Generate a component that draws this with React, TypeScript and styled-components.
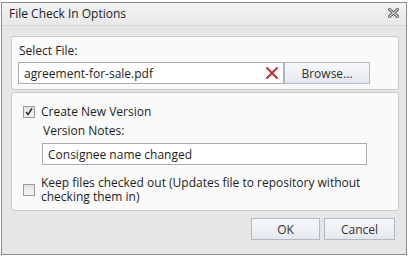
import styled, { createGlobalStyle } from 'styled-components';

const Global = createGlobalStyle`
  html, body {
    margin: 0;
    padding: 0;
    background: #ffffff;
  }
  body {
    font-family: "Open Sans", "Noto Sans", "Liberation Sans", sans-serif;
    font-size: 12px;
    color: #1e1e1e;
  }
`;

const Page = styled.div`
  width: 412px;
  height: 257px;
  padding: 2px 5px 2px 1px;
  box-sizing: border-box;
`;

const Dialog = styled.div`
  height: 100%;
  box-sizing: border-box;
  border: 1px solid #8d8d8d;
  background: #e6e6e6;
  display: flex;
  flex-direction: column;
`;

const TitleBar = styled.div`
  height: 23px;
  display: flex;
  align-items: center;
  justify-content: space-between;
  padding: 0 7px 2px 7px;
  box-sizing: border-box;
  background: linear-gradient(#f4f4f4, #e8e8e8);
  border-bottom: 1px solid #d6d6d6;
`;

const Title = styled.span`
  font-size: 12px;
  color: #222;
`;

const Body = styled.div`
  flex: 1;
  padding: 10px 7px 0 9px;
  display: flex;
  flex-direction: column;
  gap: 2px;
`;

const Panel = styled.div<{ $h: number }>`
  height: ${p => p.$h}px;
  box-sizing: border-box;
  background: #fafafa;
  border: 1px solid #c9c9c9;
  border-radius: 3px;
  padding: 6px 0 0 6px;
`;

const Label = styled.div<{ $indent?: number }>`
  padding-left: ${p => p.$indent || 0}px;
  line-height: 16px;
  margin-bottom: 3px;
`;

const NotesLabel = styled(Label)`
  margin: 4px 0 4px;
`;

const FileRow = styled.div`
  display: flex;
  height: 22px;
`;

const NotesRow = styled.div`
  padding-left: 24px;
  margin-bottom: 11px;
`;

const TextBox = styled.div<{ $w: number }>`
  width: ${p => p.$w}px;
  height: 22px;
  box-sizing: border-box;
  background: #ffffff;
  border: 1px solid #a9adb3;
  display: flex;
  align-items: center;
  justify-content: space-between;
  padding: 0 4px 0 5px;
`;

const Button = styled.div<{ $w: number }>`
  width: ${p => p.$w}px;
  height: 22px;
  box-sizing: border-box;
  border: 1px solid #b2bac6;
  background: linear-gradient(#f7f8fa, #e4e8ee);
  display: flex;
  align-items: center;
  justify-content: center;
  color: #333;
`;

const CheckRow = styled.div<{ $top?: number }>`
  display: flex;
  align-items: flex-start;
  gap: 6px;
  padding-left: 5px;
  margin-top: ${p => p.$top || 0}px;
`;

const Box = styled.div<{ $offset: number }>`
  width: 12px;
  height: 12px;
  margin-top: ${p => p.$offset}px;
  box-sizing: border-box;
  border: 1px solid #9a9a9a;
  background: linear-gradient(#e2e2e2, #f6f6f6);
  flex-shrink: 0;
  display: flex;
  align-items: center;
  justify-content: center;
`;

const CheckText = styled.div`
  line-height: 14px;
`;

const Footer = styled.div`
  display: flex;
  justify-content: flex-end;
  gap: 4px;
  padding: 5px 4px 0 0;
`;

function ClearIcon() {
  return (
    <svg width="14" height="14" viewBox="0 0 14 14">
      <path d="M1.5 1.5 L12.5 12.5 M12.5 1.5 L1.5 12.5" stroke="#c0282e" strokeWidth="1.8" />
    </svg>
  );
}

function CloseIcon() {
  return (
    <svg width="11" height="10" viewBox="0 0 11 10">
      <path d="M1.5 1.5 L9.5 8.5 M9.5 1.5 L1.5 8.5" stroke="#6a6a6a" strokeWidth="3" strokeLinecap="square" />
      <path d="M1.5 1.5 L9.5 8.5 M9.5 1.5 L1.5 8.5" stroke="#fafafa" strokeWidth="1" strokeLinecap="square" />
    </svg>
  );
}

function Tick() {
  return (
    <svg width="10" height="10" viewBox="0 0 10 10">
      <path d="M2 5 L4 7.5 L8 1.5" fill="none" stroke="#333" strokeWidth="1.6" />
    </svg>
  );
}

export default function App() {
  return (
    <Page>
      <Global />
      <Dialog>
        <TitleBar>
          <Title>File Check In Options</Title>
          <CloseIcon />
        </TitleBar>
        <Body>
          <Panel $h={54}>
            <Label $indent={1}>Select File:</Label>
            <FileRow>
              <TextBox $w={266}>
                <span>agreement-for-sale.pdf</span>
                <ClearIcon />
              </TextBox>
              <Button $w={86}>Browse...</Button>
            </FileRow>
          </Panel>
          <Panel $h={119}>
            <CheckRow $top={6}>
              <Box $offset={1}><Tick /></Box>
              <CheckText>Create New Version</CheckText>
            </CheckRow>
            <NotesLabel $indent={25}>Version Notes:</NotesLabel>
            <NotesRow>
              <TextBox $w={325}>Consignee name changed</TextBox>
            </NotesRow>
            <CheckRow>
              <Box $offset={8} />
              <CheckText>Keep files checked out (Updates file to repository without<br />checking them in)</CheckText>
            </CheckRow>
          </Panel>
          <Footer>
            <Button $w={69}>OK</Button>
            <Button $w={71}>Cancel</Button>
          </Footer>
        </Body>
      </Dialog>
    </Page>
  );
}
